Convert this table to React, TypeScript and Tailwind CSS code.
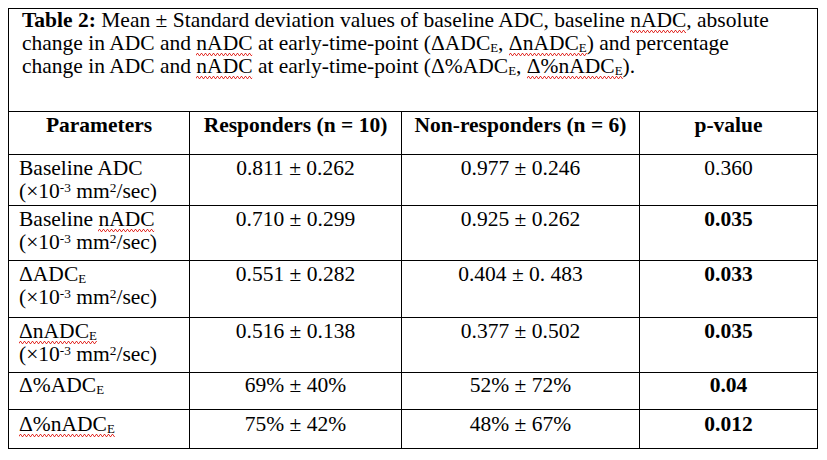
/* Table 2 — ADC / nADC responders vs non-responders
   Word-style table: Times-like serif, thin black rules, red spell-check squiggles
*/
import type { ReactNode } from 'react';

// Word's red spell-check squiggle, drawn under the word
const Squiggle = ({ children }: { children: ReactNode }) => (
  <span className="relative inline-block">
    {children}
    <svg className="absolute left-0 bottom-[-1px] w-full h-[3px]" preserveAspectRatio="none">
      <defs>
        <pattern id="wave" width="4" height="3" patternUnits="userSpaceOnUse">
          <path d="M0 2.5 L1 0.5 L2 0.5 L3 2.5 L4 2.5" fill="none" stroke="#e0201b" strokeWidth="0.9" />
        </pattern>
      </defs>
      <rect width="100%" height="3" fill="url(#wave)" />
    </svg>
  </span>
);

const E = () => <sub className="text-[0.6em] bottom-[-0.12em]">E</sub>;

const Unit = () => (
  <>
    (×10<sup className="text-[0.62em] top-[-0.45em]">-3</sup> mm<sup className="text-[0.62em] top-[-0.45em]">2</sup>/sec)
  </>
);

const rows: {
  param: ReactNode;
  resp: string;
  non: string;
  p: string;
  bold: boolean;
  h: string;
  pt: string;
}[] = [
  {
    param: (
      <>
        Baseline ADC
        <br />
        <Unit />
      </>
    ),
    resp: '0.811 ± 0.262',
    non: '0.977 ± 0.246',
    p: '0.360',
    bold: false,
    h: 'h-[51px] border-b',
    pt: 'pt-[2px]',
  },
  {
    param: (
      <>
        Baseline <Squiggle>nADC</Squiggle>
        <br />
        <Unit />
      </>
    ),
    resp: '0.710 ± 0.299',
    non: '0.925 ± 0.262',
    p: '0.035',
    bold: true,
    h: 'h-[55px] border-b',
    pt: 'pt-[2px]',
  },
  {
    param: (
      <>
        ΔADC<E />
        <br />
        <Unit />
      </>
    ),
    resp: '0.551 ± 0.282',
    non: '0.404 ± 0. 483',
    p: '0.033',
    bold: true,
    h: 'h-[57px] border-b',
    pt: 'pt-[2px]',
  },
  {
    param: (
      <>
        <Squiggle>
          ΔnADC<E />
        </Squiggle>
        <br />
        <Unit />
      </>
    ),
    resp: '0.516 ± 0.138',
    non: '0.377 ± 0.502',
    p: '0.035',
    bold: true,
    h: 'h-[55px] border-b',
    pt: 'pt-[2px]',
  },
  {
    param: (
      <>
        Δ%ADC<E />
      </>
    ),
    resp: '69% ± 40%',
    non: '52% ± 72%',
    p: '0.04',
    bold: true,
    h: 'h-[37px] border-b',
    pt: 'pt-[1px]',
  },
  {
    param: (
      <Squiggle>
        Δ%nADC<E />
      </Squiggle>
    ),
    resp: '75% ± 42%',
    non: '48% ± 67%',
    p: '0.012',
    bold: true,
    h: 'h-[38px]',
    pt: 'pt-[3px]',
  },
];

const cols = 'grid grid-cols-[181px_212px_238px_177px] border-black';

export default function App() {
  return (
    <div className="w-[827px] h-[460px] bg-white pt-[8px] pl-[8px] font-['Liberation_Serif','Times_New_Roman',serif] text-[21.5px] leading-[23px] text-black">
      <div className="w-[810px] border border-black">
        {/* Caption */}
        <div className="h-[103px] border-b border-black pl-[13px]">
          <div>
            <b>Table 2:</b> Mean ± Standard deviation values of baseline ADC, baseline <Squiggle>nADC</Squiggle>, absolute
          </div>
          <div>
            change in ADC and <Squiggle>nADC</Squiggle> at early-time-point (ΔADC<E />,{' '}
            <Squiggle>
              ΔnADC<E />
            </Squiggle>
            ) and percentage
          </div>
          <div>
            change in ADC and <Squiggle>nADC</Squiggle> at early-time-point (Δ%ADC<E />,{' '}
            <Squiggle>
              Δ%nADC<E />
            </Squiggle>
            ).
          </div>
        </div>

        {/* Header */}
        <div className={`${cols} h-[43px] border-b font-bold text-center`}>
          <div className="border-r border-black pt-[2px]">Parameters</div>
          <div className="border-r border-black pt-[2px]">Responders (n = 10)</div>
          <div className="border-r border-black pt-[2px]">Non-responders (n = 6)</div>
          <div className="pt-[2px]">p-value</div>
        </div>

        {/* Body */}
        {rows.map((r, i) => (
          <div key={i} className={`${cols} ${r.h}`}>
            <div className={`border-r border-black pl-[10px] ${r.pt}`}>{r.param}</div>
            <div className={`border-r border-black text-center ${r.pt}`}>{r.resp}</div>
            <div className={`border-r border-black text-center ${r.pt}`}>{r.non}</div>
            <div className={`text-center ${r.pt} ${r.bold ? 'font-bold' : ''}`}>{r.p}</div>
          </div>
        ))}
      </div>
    </div>
  );
}
